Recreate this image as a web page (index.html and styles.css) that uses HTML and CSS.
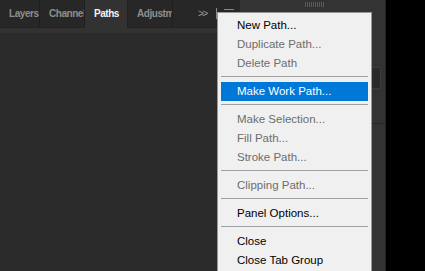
FILE: index.html
```
<!DOCTYPE html>
<html>
<head>
<meta charset="utf-8">
<link rel="stylesheet" href="styles.css">
</head>
<body>
<div class="app">
  <div class="left">
    <div class="tabbar">
      <div class="tab w40">Layers</div>
      <div class="tab w45">Channels</div>
      <div class="tab w43 active">Paths</div>
      <div class="tab w45">Adjustments</div>
      <div class="tabtools">
        <span class="more">&gt;&gt;</span>
        <span class="vsep"></span>
        <span class="burger"></span>
      </div>
    </div>
    <div class="strip"></div>
    <div class="panelbody"></div>
  </div>
  <div class="right">
    <div class="righttop"><span class="grip"></span></div>
    <div class="rightbody">
      <div class="rbtn"></div>
      <div class="rline"></div>
    </div>
  </div>
  <div class="black"></div>
</div>
<div class="menu">
  <div class="item">New Path...</div>
  <div class="item dis">Duplicate Path...</div>
  <div class="item dis">Delete Path</div>
  <div class="sep"></div>
  <div class="item hl">Make Work Path...</div>
  <div class="sep"></div>
  <div class="item dis">Make Selection...</div>
  <div class="item dis">Fill Path...</div>
  <div class="item dis">Stroke Path...</div>
  <div class="sep"></div>
  <div class="item dis">Clipping Path...</div>
  <div class="sep"></div>
  <div class="item">Panel Options...</div>
  <div class="sep"></div>
  <div class="item">Close</div>
  <div class="item">Close Tab Group</div>
</div>
</body>
</html>
```
FILE: styles.css
```
html, body {
  margin: 0;
  padding: 0;
  width: 425px;
  height: 271px;
  overflow: hidden;
  background: #000;
}
.app {
  display: flex;
  width: 425px;
  height: 271px;
}
.left {
  width: 240px;
  display: flex;
  flex-direction: column;
  background: #2b2b2b;
}
.tabbar {
  height: 27px;
  display: flex;
  background: #272727;
  border-bottom: 1px solid #222;
}
.tab {
  box-sizing: border-box;
  height: 27px;
  padding-left: 9px;
  padding-right: 2px;
  font-family: "Liberation Sans", Arial, sans-serif;
  font-size: 10px;
  font-weight: 700;
  letter-spacing: -0.45px;
  line-height: 28px;
  color: #8e8e8e;
  white-space: nowrap;
  overflow: hidden;
  border-right: 1px solid #1f1f1f;
  background: #272727;
}
.tab.active {
  background: #323232;
  color: #f2f2f2;
  height: 28px;
}
.w40 { width: 40px; }
.w45 { width: 45px; }
.w43 { width: 43px; }
.tabtools {
  display: flex;
  align-items: center;
  padding-left: 25px;
  gap: 7px;
}
.more {
  font-family: "Liberation Sans", Arial, sans-serif;
  font-size: 10px;
  color: #9a9a9a;
  letter-spacing: -1.5px;
  line-height: 10px;
  margin-top: 1px;
}
.vsep {
  width: 1px;
  height: 11px;
  background: #8a8a8a;
  margin-left: 2px;
}
.burger {
  width: 10px;
  height: 1px;
  background: #8a8a8a;
  margin-top: -8px;
}
.strip {
  height: 5px;
  background: #323232;
}
.panelbody {
  flex: 1;
  background: #2b2b2b;
}
.right {
  width: 146px;
  display: flex;
  flex-direction: column;
  background: #333;
  border-right: 1px solid #232323;
  box-sizing: border-box;
}
.righttop {
  height: 12px;
  display: flex;
  justify-content: center;
  padding-top: 2px;
  box-sizing: border-box;
}
.grip {
  width: 20px;
  height: 5px;
  margin-left: 4px;
  background: repeating-linear-gradient(90deg, #5a5a5a 0 1px, transparent 1px 2px);
}
.rightbody {
  flex: 1;
  display: flex;
  flex-direction: column;
  align-items: flex-end;
  padding-top: 55px;
  padding-right: 4px;
  border-left: 1px solid #262626;
}
.rbtn {
  width: 60px;
  height: 20px;
  background: #2a2a2a;
  border: 1px solid #3b3b3b;
  border-radius: 2px;
}
.rline {
  align-self: stretch;
  height: 1px;
  background: #262626;
  margin-top: 34px;
  margin-right: -4px;
}
.black {
  flex: 1;
  background: #000;
}
.menu {
  position: absolute;
  left: 217px;
  top: 12px;
  width: 155px;
  height: 259px;
  overflow: hidden;
  box-sizing: border-box;
  border: 1px solid #979797;
  border-bottom: 0;
  background: #f0f0f0;
  padding: 3px 3px 0 3px;
  font-family: "Liberation Sans", Arial, sans-serif;
  font-size: 11.5px;
}
.item {
  height: 19px;
  line-height: 19px;
  padding-left: 16px;
  color: #000;
  white-space: nowrap;
}
.item.dis {
  color: #6d6d6d;
}
.item.hl {
  background: #0078d7;
  color: #fff;
}
.sep {
  height: 1px;
  background: #a0a0a0;
  margin: 3px 0 5px 0;
}
```
